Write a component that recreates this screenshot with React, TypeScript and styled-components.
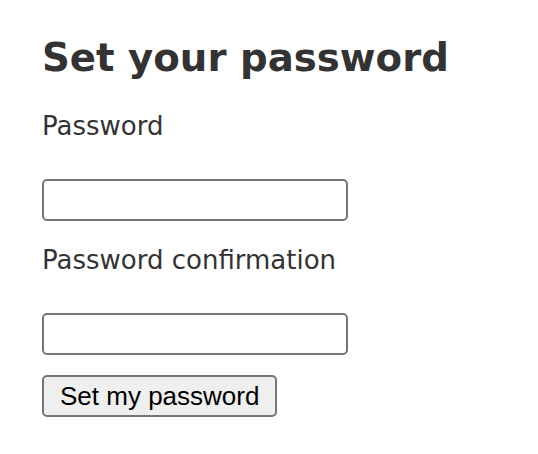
import React from 'react';
import styled, { createGlobalStyle } from 'styled-components';

const GlobalStyle = createGlobalStyle`
  html, body {
    margin: 0;
    padding: 0;
    background: #fff;
  }
  body {
    font-family: "DejaVu Sans", Verdana, sans-serif;
    color: #333;
  }
`;

const Page = styled.main`
  padding: 35px 42px 0;
`;

const Title = styled.h1`
  margin: 0 0 31px;
  font-size: 38.7px;
  font-weight: bold;
  line-height: 45px;
  color: #333;
`;

const Form = styled.form`
  display: flex;
  flex-direction: column;
  align-items: flex-start;
`;

const Label = styled.label`
  font-size: 26px;
  line-height: 30px;
  margin-bottom: 38px;
`;

const Input = styled.input`
  box-sizing: border-box;
  width: 306px;
  height: 42px;
  border: 2px solid #767676;
  border-radius: 5px;
  background: #fff;
  padding: 2px 6px;
  font-size: 26px;
  margin-bottom: ${p => (p.$last ? '20px' : '24px')};
`;

const Submit = styled.button`
  box-sizing: border-box;
  height: 42px;
  padding: 0 16px;
  border: 2px solid #767676;
  border-radius: 5px;
  background: #efefef;
  color: #000;
  font-family: "Liberation Sans", Arial, sans-serif;
  font-size: 26px;
  line-height: 1;
`;

export default function App() {
  return (
    <>
      <GlobalStyle />
      <Page>
        <Title>Set your password</Title>
        <Form onSubmit={e => e.preventDefault()}>
          <Label htmlFor="password">Password</Label>
          <Input id="password" type="password" />
          <Label htmlFor="password_confirmation">Password confirmation</Label>
          <Input id="password_confirmation" type="password" $last />
          <Submit type="submit">Set my password</Submit>
        </Form>
      </Page>
    </>
  );
}
